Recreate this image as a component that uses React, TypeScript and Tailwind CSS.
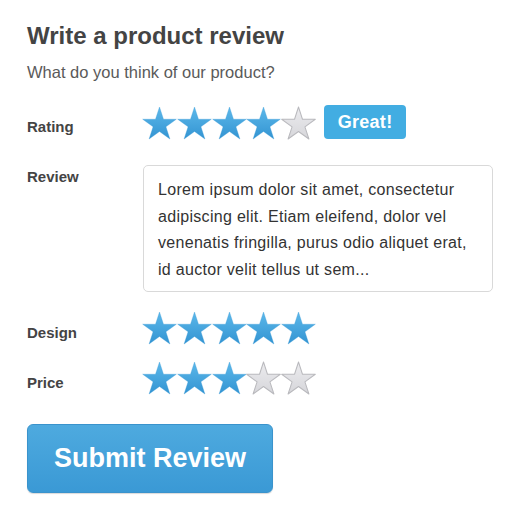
import { useId } from "react";

const STAR_POINTS =
  "50,0 61.8,36.3 100,36.3 69.1,58.8 80.9,95.1 50,72.7 19.1,95.1 30.9,58.8 0,36.3 38.2,36.3";

function Star({ filled }: { filled: boolean }) {
  const id = useId();
  return (
    <svg viewBox="-2 -2 104 99" className="w-[35px] h-[34px] -mr-[0.2px] shrink-0">
      <defs>
        <linearGradient id={id} x1="0" y1="0" x2="0" y2="1">
          {filled ? (
            <>
              <stop offset="0%" stopColor="#5cb8ea" />
              <stop offset="100%" stopColor="#3394d2" />
            </>
          ) : (
            <>
              <stop offset="0%" stopColor="#ececef" />
              <stop offset="100%" stopColor="#d6d6da" />
            </>
          )}
        </linearGradient>
      </defs>
      <polygon
        points={STAR_POINTS}
        fill={`url(#${id})`}
        stroke={filled ? "#3d9dd8" : "#b9b9bd"}
        strokeWidth={filled ? 1 : 3}
        strokeLinejoin="round"
      />
    </svg>
  );
}

function Stars({ value }: { value: number }) {
  return (
    <div className="flex">
      {[1, 2, 3, 4, 5].map((n) => (
        <Star key={n} filled={n <= value} />
      ))}
    </div>
  );
}

export default function App() {
  return (
    <div
      className="w-[520px] h-[521px] bg-white pl-[27px] pt-[22px] text-[#444]"
      style={{ fontFamily: '"Liberation Sans", Arial, sans-serif' }}
    >
      <h1 className="text-[24px] font-bold leading-[28px] text-[#444]">
        Write a product review
      </h1>
      <p className="text-[16.5px] leading-[20px] mt-[11.5px] text-[#5a5a5a]">
        What do you think of our product?
      </p>

      {/* rating */}
      <div className="flex items-start mt-[24.5px]">
        <div className="w-[115px] text-[15px] leading-[20px] font-bold pt-[11px]">Rating</div>
        <Stars value={4} />
        <span className="ml-[8px] -mt-[1px] h-[34px] w-[82px] rounded-[4px] bg-[#42ade2] text-white font-bold text-[18px] flex items-center justify-center tracking-[0.3px]">
          Great!
        </span>
      </div>

      {/* review */}
      <div className="flex items-start mt-[25px]">
        <div className="w-[116px] text-[15px] leading-[20px] font-bold pt-[2px]">Review</div>
        <div className="w-[350px] h-[127px] border border-[#d9d9d9] rounded-[5px] px-[14px] pt-[11px] text-[16px] leading-[26.5px] tracking-[0.3px] text-[#333]">
          Lorem ipsum dolor sit amet, consectetur adipiscing elit. Etiam eleifend, dolor vel
          venenatis fringilla, purus odio aliquet erat, id auctor velit tellus ut sem...
        </div>
      </div>

      {/* design */}
      <div className="flex items-start mt-[19px]">
        <div className="w-[115px] text-[15px] leading-[20px] font-bold pt-[12px]">Design</div>
        <Stars value={5} />
      </div>

      {/* price */}
      <div className="flex items-start mt-[16px]">
        <div className="w-[115px] text-[15px] leading-[20px] font-bold pt-[12px]">Price</div>
        <Stars value={3} />
      </div>

      <button className="mt-[29px] w-[246px] h-[69px] rounded-[6px] bg-gradient-to-b from-[#4eaadf] to-[#3a99d5] border border-[#3a93cc] text-white font-bold text-[27px] shadow-[0_1px_1px_rgba(0,0,0,0.15)]">
        Submit Review
      </button>
    </div>
  );
}
